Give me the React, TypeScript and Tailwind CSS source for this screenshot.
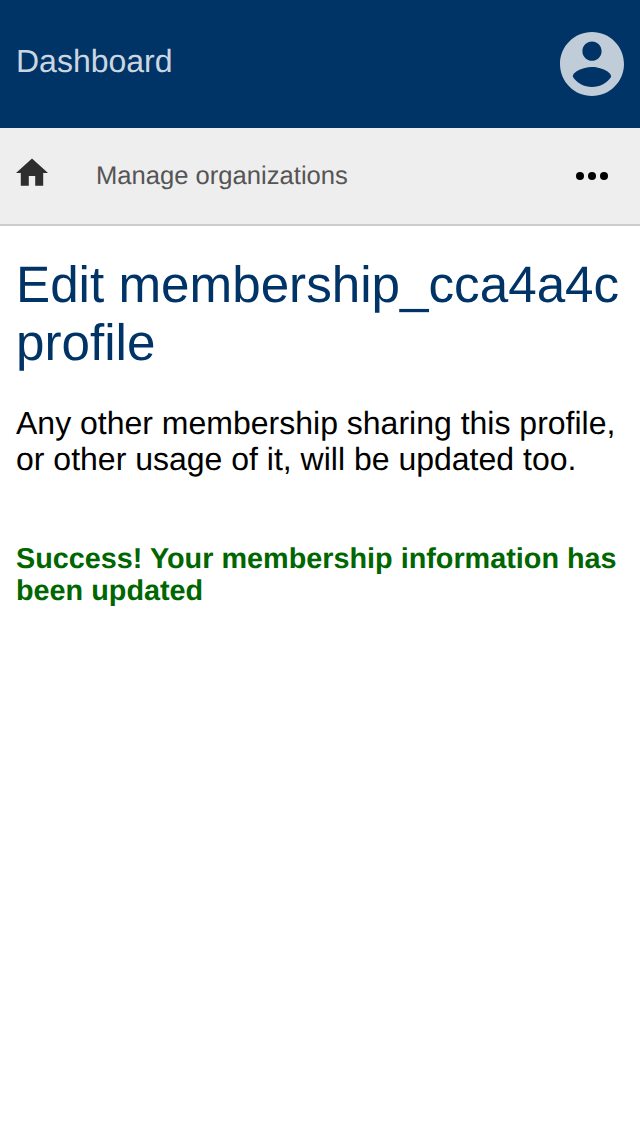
export default function App() {
  return (
    <div className="min-h-[1136px] bg-white text-black font-['Liberation_Sans',Arial,sans-serif] [text-rendering:geometricPrecision]">
      <header className="flex h-32 items-center justify-between bg-[#003366] px-4">
        <span className="pb-[6px] text-[32px] leading-9 text-[#ccd6e0]">Dashboard</span>
        <svg className="size-16" viewBox="2 2 20 20" fill="#c0ccd8" aria-label="Account">
          <path d="M12 2C6.48 2 2 6.48 2 12s4.48 10 10 10 10-4.48 10-10S17.52 2 12 2zm0 3c1.66 0 3 1.34 3 3s-1.34 3-3 3-3-1.34-3-3 1.34-3 3-3zm0 14.2c-2.5 0-4.71-1.28-6-3.22.03-1.99 4-3.08 6-3.08 1.99 0 5.97 1.09 6 3.08-1.29 1.94-3.5 3.22-6 3.22z" />
        </svg>
      </header>
      <nav className="flex h-[98px] items-center border-b-2 border-[#cccccc] bg-[#eeeeee] pl-4 pr-8">
        <svg className="mb-2 h-7 w-8" viewBox="2 2.7 20 17.5" fill="#2e2e2e" aria-label="Home">
          <path d="M10 20v-6h4v6h5v-8h3L12 3 2 12h3v8z" />
        </svg>
        <span className="ml-12 text-[25.6px] leading-8 text-[#555555]">Manage organizations</span>
        <svg className="ml-auto h-2 w-8" viewBox="0 0 32 8" aria-label="More">
          <circle cx="4" cy="4" r="4" />
          <circle cx="16" cy="4" r="4" />
          <circle cx="28" cy="4" r="4" />
        </svg>
      </nav>
      <main className="px-4 pt-[30px]">
        <h1 className="text-[51.2px] leading-[58px] text-[#003366]">Edit membership_cca4a4c profile</h1>
        <p className="mt-[33px] text-[32px] leading-9">Any other membership sharing this profile, or other usage of it, will be updated too.</p>
        <p className="mt-[66px] text-[28.8px] font-bold leading-8 text-[#006600]">Success! Your membership information has been updated</p>
      </main>
    </div>
  );
}
